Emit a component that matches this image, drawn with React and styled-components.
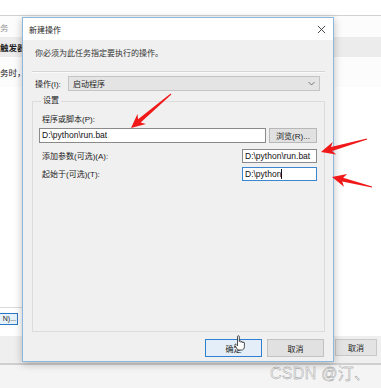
import React from 'react'
import styled, { createGlobalStyle } from 'styled-components'

const GlobalStyle = createGlobalStyle`
  html, body { margin: 0; padding: 0; background: #fff; }
  body { font-family: "Noto Sans CJK SC", "Liberation Sans", sans-serif; }
`

const UI_FONT = `"Liberation Sans", "Noto Sans CJK SC", sans-serif`

function Arrow({ x1, y1, x2, y2 }) {
  const len = Math.hypot(x2 - x1, y2 - y1)
  const ux = (x2 - x1) / len
  const uy = (y2 - y1) / len
  const nx = -uy
  const ny = ux
  const headLen = 14
  const headW = 6.5
  const shaftW = 2
  const notch = 3
  const pt = (bx, by, a, b) => `${bx + ux * a + nx * b},${by + uy * a + ny * b}`
  const points = [
    pt(x1, y1, 0, 0.5),
    pt(x2, y2, -(headLen - notch), shaftW),
    pt(x2, y2, -headLen, headW),
    pt(x2, y2, 0, 0),
    pt(x2, y2, -headLen, -headW),
    pt(x2, y2, -(headLen - notch), -shaftW),
    pt(x1, y1, 0, -0.5),
  ].join(' ')
  return <polygon points={points} fill="#f01818" />
}

function App() {
  return (
    <>
      <GlobalStyle />
      <Desktop>
        <TopStrip />
        <BgWindow>
          <BgRow>务</BgRow>
          <BgBand><span>触发器</span></BgBand>
          <BgRow $tall>务时，</BgRow>
          <BgContent>
            <BgPanelEdge>
              <BgButton>N)...</BgButton>
            </BgPanelEdge>
          </BgContent>
          <BgFooter>
            <BgFooterButton>取消</BgFooterButton>
          </BgFooter>
        </BgWindow>

        <Dialog>
          <TitleBar>
            <Title>新建操作</Title>
            <CloseIcon viewBox="0 0 10 10">
              <path d="M1 1 L9 9 M9 1 L1 9" stroke="#333" strokeWidth="1" />
            </CloseIcon>
          </TitleBar>
          <Body>
            <Instruction>你必须为此任务指定要执行的操作。</Instruction>
            <Separator />
            <ActionRow>
              <Label>操作(I):</Label>
              <Select>
                <span>启动程序</span>
                <svg width="7" height="5" viewBox="0 0 7 5">
                  <path d="M0.5 1 L3.5 4 L6.5 1" fill="none" stroke="#666" strokeWidth="0.9" />
                </svg>
              </Select>
            </ActionRow>
            <GroupBox>
              <Legend>设置</Legend>
              <FieldLabel>程序或脚本(P):</FieldLabel>
              <InputRow>
                <TextInput $wide>D:\python\run.bat</TextInput>
                <SmallButton>浏览(R)...</SmallButton>
              </InputRow>
              <ParamRow $first>
                <FieldLabel>添加参数(可选)(A):</FieldLabel>
                <TextInput>D:\python\run.bat</TextInput>
              </ParamRow>
              <ParamRow>
                <FieldLabel>起始于(可选)(T):</FieldLabel>
                <TextInput $focused>D:\python<Caret /></TextInput>
              </ParamRow>
            </GroupBox>
            <ButtonRow>
              <DialogButton $primary>确定</DialogButton>
              <DialogButton>取消</DialogButton>
            </ButtonRow>
          </Body>
        </Dialog>

        <Overlay width="381" height="388" viewBox="0 0 381 388">
          <Arrow x1={171} y1={94} x2={131} y2={128} />
          <Arrow x1={367} y1={139} x2={321} y2={152} />
          <Arrow x1={372} y1={187} x2={332} y2={177} />
          <path
            d="M237.5 336.5 c0-1 1.8-1 1.8 0 v5 c0-0.9 1.7-0.9 1.7 0 v0.8 c0-0.9 1.7-0.9 1.7 0 v0.6 c0-0.9 1.7-0.9 1.7 0 v3.6 c0 2-1 3.5-2.6 3.5 h-2.8 c-1 0-1.6-0.6-2.2-1.6 l-2-3.2 c-0.4-0.8 0.7-1.4 1.3-0.8 l1.4 1.4 z"
            fill="#fff"
            stroke="#222"
            strokeWidth="0.8"
          />
        </Overlay>

        <Watermark>CSDN @汀、</Watermark>
      </Desktop>
    </>
  )
}

const Desktop = styled.div`
  position: relative;
  width: 381px;
  height: 388px;
  overflow: hidden;
  background: #f4f4f4;
  display: flex;
  flex-direction: column;
`

const TopStrip = styled.div`
  height: 15px;
  background: #fff;
  flex-shrink: 0;
`

const BgWindow = styled.div`
  height: 347px;
  flex-shrink: 0;
  border-top: 1px solid #d2d2d2;
  border-bottom: 2px solid #cfcfcf;
  background: #fff;
  display: flex;
  flex-direction: column;
  font-family: ${UI_FONT};
  font-size: 8.5px;
  color: #222;
`

const BgRow = styled.div`
  height: ${p => (p.$tall ? 30 : 21)}px;
  display: flex;
  align-items: center;
  color: ${p => (p.$tall ? '#222' : '#999')};
  background: #fcfcfc;
`

const BgBand = styled.div`
  height: 20px;
  background: #ececec;
  display: flex;
  align-items: center;
  span {
    font-weight: bold;
  }
`

const BgContent = styled.div`
  flex: 1;
  display: flex;
  flex-direction: column;
  justify-content: flex-end;
`

const BgPanelEdge = styled.div`
  width: 22px;
  height: 29px;
  border-top: 1px solid #dadada;
  padding-top: 5px;
  box-sizing: border-box;
`

const BgButton = styled.div`
  width: 18px;
  height: 12px;
  box-sizing: border-box;
  border: 1px solid #2b78c8;
  border-left: none;
  background: #e5f1fb;
  font-size: 7px;
  line-height: 10px;
  text-align: right;
  padding-right: 1px;
  overflow: hidden;
  white-space: nowrap;
`

const BgFooter = styled.div`
  height: 27px;
  background: #efefef;
  display: flex;
  justify-content: flex-end;
  align-items: flex-start;
  padding-top: 3px;
  padding-right: 4px;
  box-sizing: border-box;
`

const BgFooterButton = styled.div`
  width: 42px;
  height: 17px;
  box-sizing: border-box;
  border: 1px solid #c8c8c8;
  background: #e3e3e3;
  display: flex;
  align-items: center;
  justify-content: center;
  font-size: 8px;
`

const Dialog = styled.div`
  position: absolute;
  left: 22px;
  top: 17px;
  width: 312px;
  height: 345px;
  box-sizing: border-box;
  border: 1px solid #8fb6dc;
  background: #f0f0f0;
  box-shadow: 0 2px 8px rgba(0, 0, 0, 0.25);
  display: flex;
  flex-direction: column;
  font-family: ${UI_FONT};
  font-size: 8.5px;
  color: #1e1e1e;
`

const TitleBar = styled.div`
  height: 22px;
  flex-shrink: 0;
  background: #fff;
  display: flex;
  align-items: center;
  justify-content: space-between;
  padding: 0 7px 0 6px;
`

const Title = styled.span`
  font-size: 8px;
  color: #222;
`

const CloseIcon = styled.svg`
  width: 9px;
  height: 9px;
`

const Body = styled.div`
  flex: 1;
  display: flex;
  flex-direction: column;
  padding: 0 8px 0 9px;
`

const Instruction = styled.div`
  margin-top: 8px;
  height: 12px;
  line-height: 12px;
  padding-left: 3px;
  font-size: 8px;
  color: #333;
`

const Separator = styled.div`
  margin-top: 11px;
  border-top: 1px solid #d5d5d5;
  border-bottom: 1px solid #fafafa;
`

const ActionRow = styled.div`
  margin-top: 3px;
  height: 15px;
  display: flex;
  align-items: center;
  padding-left: 3px;
  padding-right: 5px;
`

const Label = styled.span`
  width: 33px;
  flex-shrink: 0;
  font-size: 8px;
`

const Select = styled.div`
  flex: 1;
  height: 15px;
  box-sizing: border-box;
  border: 1px solid #c4c4c4;
  background: #e4e4e4;
  display: flex;
  align-items: center;
  justify-content: space-between;
  padding: 0 4px 0 4px;
  font-size: 8px;
`

const GroupBox = styled.fieldset`
  flex: 1;
  margin: 4px 0 0 0;
  padding: 0 7px 0 6px;
  border: 1px solid #dcdcdc;
  min-width: 0;
`

const Legend = styled.legend`
  padding: 0 2px;
  margin-left: 2px;
  font-size: 8px;
  line-height: 12px;
`

const FieldLabel = styled.div`
  font-size: 8px;
  line-height: 12px;
  padding-left: 3px;
  &:first-of-type {
    margin-top: 7px;
  }
`

const InputRow = styled.div`
  margin-top: 2px;
  display: flex;
  justify-content: space-between;
  align-items: center;
`

const TextInput = styled.div`
  width: ${p => (p.$wide ? 227 : 75)}px;
  height: ${p => (p.$wide ? 15 : 14)}px;
  box-sizing: border-box;
  border: 1px solid ${p => (p.$focused ? '#3a86d0' : '#8a8a8a')};
  background: #fff;
  font-size: 8.5px;
  line-height: ${p => (p.$wide ? 13 : 12)}px;
  padding-left: 2px;
  white-space: nowrap;
  overflow: hidden;
  color: #111;
`

const Caret = styled.span`
  display: inline-block;
  width: 1px;
  height: 10px;
  background: #111;
  vertical-align: -2px;
`

const SmallButton = styled.div`
  width: 48px;
  height: 15px;
  box-sizing: border-box;
  border: 1px solid #b8b8b8;
  background: #e1e1e1;
  display: flex;
  align-items: center;
  justify-content: center;
  font-size: 8px;
`

const ParamRow = styled.div`
  margin-top: ${p => (p.$first ? 5 : 3)}px;
  display: flex;
  justify-content: space-between;
  align-items: center;
  ${FieldLabel} {
    margin-top: 3px;
  }
`

const ButtonRow = styled.div`
  display: flex;
  justify-content: flex-end;
  gap: 5px;
  margin: 7px 1px 4px 0;
`

const DialogButton = styled.div`
  width: 57px;
  height: 18px;
  box-sizing: border-box;
  border: 1px solid ${p => (p.$primary ? '#2f80d0' : '#c2c2c2')};
  background: ${p => (p.$primary ? '#e3eef9' : '#e1e1e1')};
  display: flex;
  align-items: center;
  justify-content: center;
  font-size: 8px;
`

const Overlay = styled.svg`
  position: absolute;
  left: 0;
  top: 0;
  pointer-events: none;
`

const Watermark = styled.div`
  position: absolute;
  left: 270px;
  top: 360px;
  font-family: "Liberation Sans", "Noto Sans CJK SC", sans-serif;
  font-size: 16px;
  letter-spacing: 0.3px;
  color: #eeeeee;
  -webkit-text-stroke: 0.35px #8f8f8f;
  white-space: nowrap;
`

export default App
